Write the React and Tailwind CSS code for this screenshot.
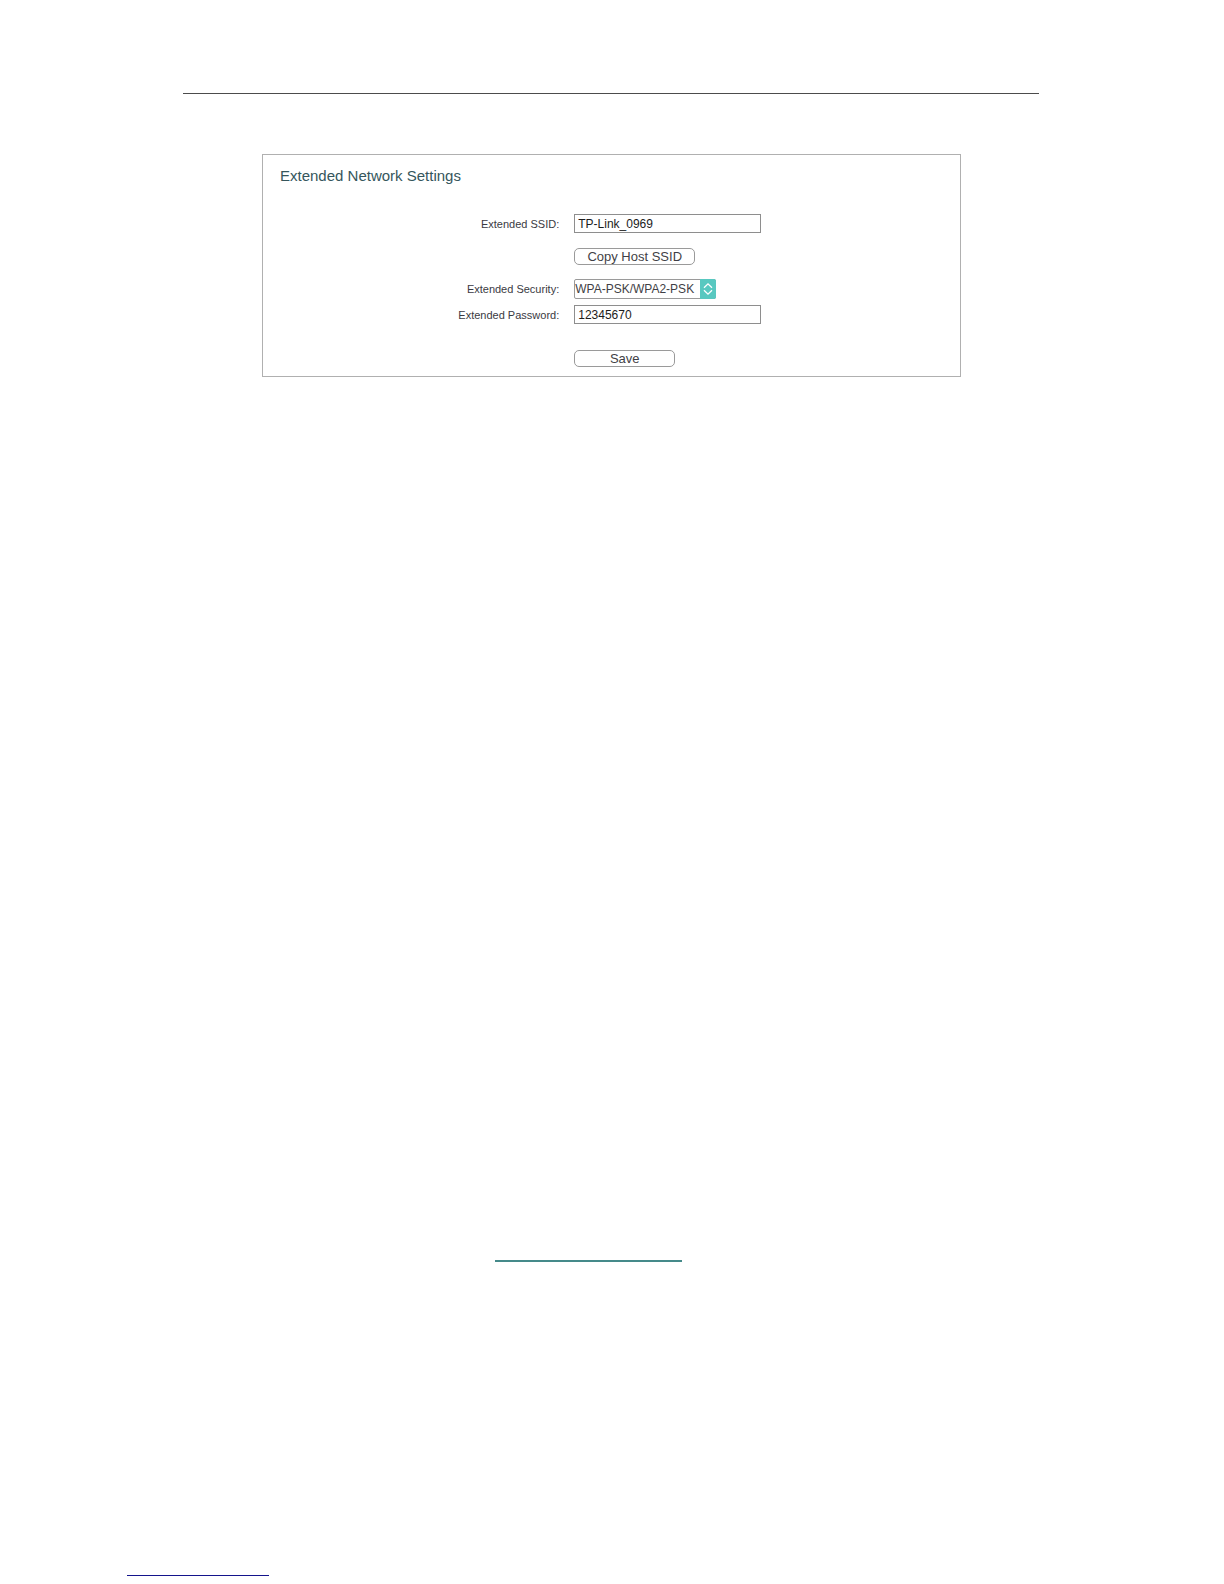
function Row({ label, htmlFor, className, children }) {
  return (
    <div className={`grid grid-cols-[42.5%_1fr] items-center gap-x-[15px] ${className}`}>
      {label ? (
        <label htmlFor={htmlFor} className="text-right text-[11px] leading-4 text-[#3a3a42]">
          {label}
        </label>
      ) : (
        <span />
      )}
      <div className="flex">{children}</div>
    </div>
  );
}

const textBox =
  "h-[19px] w-[187px] border border-[#8e8e8e] bg-white px-[3px] text-xs text-[#1c1c1c] outline-none";
const button =
  "flex h-[17px] items-center justify-center rounded-[5px] border border-[#9a9a9a] bg-white text-[13px] leading-none text-[#3f3f46]";

export default function App() {
  return (
    <div className="flex min-h-screen flex-col bg-white pb-2 font-['Liberation_Sans',Arial,sans-serif]">
      <main className="ml-[183px] mr-[185px] pt-[93px]">
        <hr className="border-t border-[#4c4c4c]" />
        <form
          onSubmit={(e) => e.preventDefault()}
          className="ml-[79px] mr-[78px] mt-[60px] border border-[#b0b0b0] pb-[9px]"
        >
          <h1 className="ml-[17px] mt-[11px] text-[15px] leading-5 text-[#35565c]">
            Extended Network Settings
          </h1>
          <Row label="Extended SSID:" htmlFor="ssid" className="mt-7">
            <input id="ssid" type="text" defaultValue="TP-Link_0969" className={textBox} />
          </Row>
          <Row className="mt-[15px]">
            <button type="button" className={`${button} w-[121px]`}>
              Copy Host SSID
            </button>
          </Row>
          <Row label="Extended Security:" htmlFor="security" className="mt-[14px]">
            <div className="relative">
              <select
                id="security"
                defaultValue="WPA-PSK/WPA2-PSK"
                className="block h-5 w-[142px] appearance-none rounded-[2px] border border-[#9a9a9a] bg-white text-xs leading-none text-[#3f3f46] outline-none"
              >
                <option>WPA-PSK/WPA2-PSK</option>
              </select>
              <span className="pointer-events-none absolute inset-y-0 right-0 flex w-4 items-center justify-center rounded-r-[2px] bg-[#58c8c0]">
                <svg width="10" height="14" viewBox="0 0 10 14" fill="none" stroke="white" strokeWidth="1.3" aria-hidden="true">
                  <path d="M1 5.8 5 1.8 9 5.8M1 8.2 5 12.2 9 8.2" />
                </svg>
              </span>
            </div>
          </Row>
          <Row label="Extended Password:" htmlFor="password" className="mt-[6px]">
            <input id="password" type="text" defaultValue="12345670" className={textBox} />
          </Row>
          <Row className="mt-[26px]">
            <button type="submit" className={`${button} w-[101px]`}>
              Save
            </button>
          </Row>
        </form>
      </main>
      <hr className="ml-[495px] mt-auto w-[187px] border-t-2 border-[#458a8a]" />
      <hr className="ml-[127px] mt-[313px] w-[142px] border-t border-[#14148c]" />
    </div>
  );
}
